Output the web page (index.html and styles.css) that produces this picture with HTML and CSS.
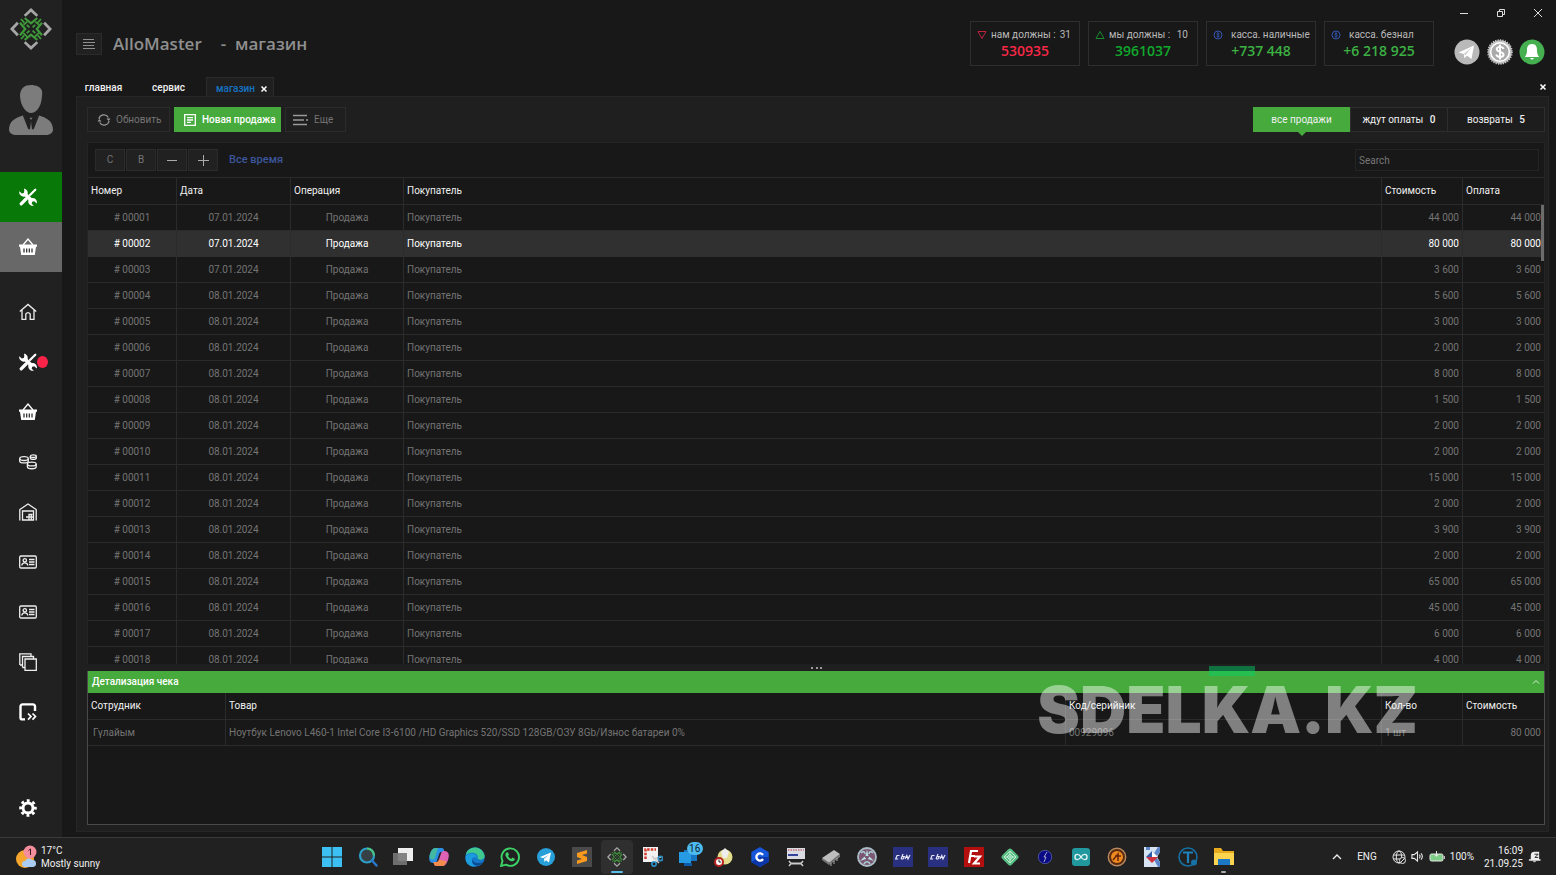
FILE: index.html
```html
<!DOCTYPE html>
<html lang="ru">
<head>
<meta charset="utf-8">
<meta name="viewport" content="width=device-width, initial-scale=1">
<title>AlloMaster - магазин</title>
<link rel="stylesheet" href="styles.css">
</head>
<body>
<svg class="sprite" aria-hidden="true">
  <symbol id="logo" viewBox="0 0 40 40">
    <g fill="none" stroke="#a6a6a6" stroke-width="2.6">
      <path d="M14 7.500 20 1.800l6 5.700M14 32.500l6 5.700 6-5.700M7.500 14 1.800 20l5.700 6M32.500 14l5.700 6-5.700 6"/>
    </g>
    <g fill="none" stroke="#3f9a3a" stroke-width="2.1">
      <path d="m14 9.500 6 5 6-5M14 30.500l6-5 6 5M9.500 14l5 6-5 6M30.500 14l-5 6 5 6"/>
      <path d="m10.500 10.500 3 3.500M29.500 10.500l-3 3.500M10.500 29.500l3-3.500M29.500 29.500l-3-3.500M13 16l3.500-3M24 13l3.500 3M12.800 24l3.700 3.500M27.200 24l-3.700 3.500M16 16l2.500 2.500M24 16l-2.500 2.500M16 24l2.500-2.500M24 24l-2.500-2.500" stroke-width="1.700"/>
    </g>
  </symbol>
  <symbol id="tools" viewBox="0 0 18 18">
    <path d="M16.300 1.700 11 7M7 11l-5 5" fill="none" stroke="#fff" stroke-width="2.200" stroke-linecap="round"/>
    <path d="M7 11l-4.800 4.800" fill="none" stroke="#fff" stroke-width="3.200" stroke-linecap="round"/>
    <path d="M5 .4A4.500 4.500 0 0 1 8.600 6l4 4a4.500 4.500 0 0 1 5.200 5.500l-2.600-2.300-2 .5-.5 2 2.200 2A4.500 4.500 0 0 1 9.400 12.200L5.700 8.500A4.500 4.500 0 0 1 .3 3.200l2.500 2.300 2-.5.500-2z" fill="#fff"/>
  </symbol>
  <symbol id="basket" viewBox="0 0 18 18">
    <path d="M4 7 9 1l5 6" fill="none" stroke="#fff" stroke-width="1.300"/>
    <path d="M0 6.600h18v2.200h-1L15.800 17H2.200L1 8.800H0z" fill="#fff"/>
    <path d="M5 10.500v4M7.700 10.500v4M10.300 10.500v4M13 10.500v4" stroke="#222" stroke-width="1.200"/>
  </symbol>
  <symbol id="house" viewBox="0 0 18 18">
    <path d="M.8 8.600 9 1.400l8.200 7.200M3 7v9.300h3.800V11q2.200-2.600 4.400 0v5.300H15V7" fill="none" stroke="#eee" stroke-width="1.300"/>
  </symbol>
  <symbol id="coins" viewBox="0 0 18 18">
    <g fill="none" stroke="#eee" stroke-width="1.300">
      <ellipse cx="5" cy="5.600" rx="4.300" ry="1.900"/><path d="M.7 5.600V8c0 2.600 8.600 2.600 8.600 0V5.600"/>
      <ellipse cx="14.300" cy="3.200" rx="3" ry="1.300"/><path d="M11.300 3.200V5c0 1.900 6 1.900 6 0V3.200"/>
      <ellipse cx="12.800" cy="11" rx="4.400" ry="1.900"/><path d="M8.400 11v2.800c0 2.600 8.800 2.600 8.800 0V11"/>
    </g>
  </symbol>
  <symbol id="store" viewBox="0 0 18 18">
    <g fill="none" stroke="#eee" stroke-width="1.300"><path d="M.8 17.500V6.500L9 1l8.200 5.500v11M3.500 17V8h11v9zM7 14h3v-2.500h3.500M10 17v-5M12.300 12v5M10 14h4"/></g>
  </symbol>
  <symbol id="card" viewBox="0 0 18 18">
    <g fill="none" stroke="#eee" stroke-width="1.300"><rect x=".7" y="3" width="16.600" height="12" rx="1.200"/><circle cx="5.800" cy="7.300" r="1.700"/><path d="M2.800 12.500c.5-3.600 5.500-3.600 6 0M10 6.500h5.500M10 9h5.500M10 11.500h5.500"/></g>
  </symbol>
  <symbol id="copies" viewBox="0 0 18 18">
    <g fill="none" stroke="#eee" stroke-width="1.300"><path d="M.8 12V.8H12v2M1 12h2M3.500 14.500v-11h11v2.300M3.500 14.500H6M6 6h11.300v11.300H6z"/></g>
  </symbol>
  <symbol id="exit" viewBox="0 0 18 18">
    <path d="M16 8V3.500A2 2 0 0 0 14 1.400H3.500a2 2 0 0 0-2 2v11a2 2 0 0 0 2 2H6" fill="none" stroke="#fff" stroke-width="2.400"/>
    <path d="m9 10.500 3 3-3 3.200M13.500 10.500l3 3-3 3.200" fill="none" stroke="#fff" stroke-width="1.700"/>
  </symbol>
  <symbol id="gear" viewBox="0 0 18 18">
    <circle cx="9" cy="9" r="5" fill="none" stroke="#fff" stroke-width="3"/>
    <circle cx="9" cy="9" r="7.400" fill="none" stroke="#fff" stroke-width="2.800" stroke-dasharray="2.900 2.910" stroke-dashoffset="1.450"/>
  </symbol>
  <symbol id="coin" viewBox="0 0 10 10">
    <g fill="none" stroke="#3454b0" stroke-width="1"><circle cx="5" cy="5" r="4"/><path d="M6.500 3.700C5.800 2.800 3.600 3 3.800 4.100c.2 1 2.600.6 2.600 1.800 0 1-2.200 1.200-3 .2M5 2.200v5.600" stroke-width=".8"/></g>
  </symbol>
</svg>

<div class="shell">
  <aside class="side">
    <svg class="side-logo"><use href="#logo"/></svg>
    <svg class="avatar" viewBox="0 0 44 52">
      <path d="M11 12C11 4 16 1 22 1c5 0 10 2 11 6 .5 3 0 4-.2 7C32 23 27 29 22 29S11.500 22 11 12z" fill="#7c7c7c"/>
      <path d="M0 46c0-9 6-12 15-15l6 15 1-10-2-3h4l-2 3 1 10 6-15c9 3 15 6 15 15 0 3-4 5-7 5H7c-3 0-7-2-7-5z" fill="#7c7c7c"/>
      <path d="m14.500 31 5.500 14 .7-8.500L18.500 33h7l-2.200 3.500L24 45l5.500-14" fill="none" stroke="#212121" stroke-width="1.600"/>
    </svg>
    <nav class="nav">
      <button class="nav-item nav-green" aria-label="Сервис"><svg><use href="#tools"/></svg></button>
      <button class="nav-item nav-grey" aria-label="Магазин"><svg><use href="#basket"/></svg></button>
      <button class="nav-item nav-gap" aria-label="Главная"><svg><use href="#house"/></svg></button>
      <button class="nav-item" aria-label="Ремонты"><svg><use href="#tools"/></svg><span class="dot"></span></button>
      <button class="nav-item" aria-label="Продажи"><svg><use href="#basket"/></svg></button>
      <button class="nav-item" aria-label="Деньги"><svg><use href="#coins"/></svg></button>
      <button class="nav-item" aria-label="Склад"><svg><use href="#store"/></svg></button>
      <button class="nav-item" aria-label="Клиенты"><svg><use href="#card"/></svg></button>
      <button class="nav-item" aria-label="Сотрудники"><svg><use href="#card"/></svg></button>
      <button class="nav-item" aria-label="Документы"><svg><use href="#copies"/></svg></button>
      <button class="nav-item" aria-label="Выход"><svg><use href="#exit"/></svg></button>
      <button class="nav-item nav-last" aria-label="Настройки"><svg><use href="#gear"/></svg></button>
    </nav>
  </aside>

  <main class="main">
    <header class="top">
      <button class="burger" aria-label="Меню"><svg viewBox="0 0 14 12"><path d="M1 1.500h11M1 4.500h12M1 7.500h11M1 10.500h12" stroke="#8f8f8f"/></svg></button>
      <h1 class="title"><span>AlloMaster</span><span>-&nbsp; магазин</span></h1>
      <div class="stats">
        <section class="stat"><p><svg viewBox="0 0 10 10"><path d="M1 1.500h8L5 8.500z" fill="none" stroke="#c02340"/></svg>нам должны :<i>31</i></p><b class="red">530935</b></section>
        <section class="stat"><p><svg viewBox="0 0 10 10"><path d="M1 8.500h8L5 1.500z" fill="none" stroke="#168a2c"/></svg>мы должны :<i>10</i></p><b class="green">3961037</b></section>
        <section class="stat"><p><svg><use href="#coin"/></svg><span>касса. наличные</span></p><b class="lime">+737 448</b></section>
        <section class="stat"><p><svg><use href="#coin"/></svg><span>касса. безнал</span></p><b class="lime">+6 218 925</b></section>
      </div>
      <div class="corner">
        <div class="win">
          <button aria-label="Свернуть"><svg viewBox="0 0 10 10"><path d="M1 5.500h8" stroke="#ddd"/></svg></button>
          <button aria-label="Развернуть"><svg viewBox="0 0 10 10"><path d="M1.500 3.500h5v5h-5zM3.500 3V1.500h5v5H7" fill="none" stroke="#ddd"/></svg></button>
          <button aria-label="Закрыть"><svg viewBox="0 0 10 10"><path d="m1 1 8 8M9 1 1 9" stroke="#ddd"/></svg></button>
        </div>
        <div class="round">
          <button aria-label="Сообщения"><svg viewBox="0 0 26 26"><circle cx="13" cy="13" r="12.500" fill="#b9b9b9"/><path d="m4.500 13.500 15.500-7-2.500 13.500-4.500-3.300-2.700 2.500-.5-4.200z" fill="#fff"/><path d="m9.800 15 7.200-6.300-5.500 7.300" fill="#c9c9c9"/></svg></button>
          <button aria-label="Оплата"><svg viewBox="0 0 26 26"><circle cx="13" cy="13" r="11.800" fill="#c4c4c4" stroke="#c4c4c4" stroke-width="2" stroke-dasharray="1.200 1.200"/><circle cx="13" cy="13" r="9.300" fill="#aaa" stroke="#fff" stroke-width="1.500"/><path d="M16.500 10c-.8-3-6.800-2.800-6.800.2 0 3.200 6.900 2 6.900 5.400 0 3.200-6.600 3.200-7.400 0M13 5.500v15" fill="none" stroke="#fff" stroke-width="1.900"/></svg></button>
          <button aria-label="Уведомления"><svg viewBox="0 0 26 26"><circle cx="13" cy="13" r="12.500" fill="#46b050"/><path d="M13 5c4 0 5 3 5 6 0 4 1 5 2 7H6c1-2 2-3 2-7 0-3 1-6 5-6zM11 19h4q-2 3-4 0z" fill="#fff"/></svg></button>
        </div>
      </div>
    </header>

    <div class="tabs">
      <button class="tab">главная</button>
      <button class="tab">сервис</button>
      <div class="tab tab-on"><span>магазин</span><button class="x" aria-label="Закрыть вкладку"><svg viewBox="0 0 8 8"><path d="m1.500 1.500 5 5M6.500 1.500l-5 5" stroke="#fff" stroke-width="1.500"/></svg></button></div>
      <button class="x x-end" aria-label="Закрыть все"><svg viewBox="0 0 8 8"><path d="m1.500 1.500 5 5M6.500 1.500l-5 5" stroke="#fff" stroke-width="1.500"/></svg></button>
    </div>

    <div class="panel">
      <div class="bar">
        <button class="btn"><svg viewBox="0 0 14 14"><path d="M2 6a5 5 0 0 1 9.300-1.500M12 8a5 5 0 0 1-9.300 1.500" fill="none" stroke="#999" stroke-width="1.300"/><path d="M9.500 5.500h4L11.700 8zM.5 8.500h4L2.300 6z" fill="#999"/></svg>Обновить</button>
        <button class="btn btn-green"><svg viewBox="0 0 14 14"><path d="M1.700 1.700h10.600v10.600H1.700zM4 4.700h6M4 7h6M4 9.300h4" fill="none" stroke="#fff" stroke-width="1.300"/></svg>Новая продажа</button>
        <button class="btn btn-more"><svg class="wide" viewBox="0 0 16 14"><path d="M0 2.500h14M0 7h11M13 7h2M0 11.500h14" stroke="#999" stroke-width="1.300"/></svg>Еще</button>
        <div class="filters">
          <button class="filter filter-on">все продажи</button>
          <button class="filter">ждут оплаты <b>0</b></button>
          <button class="filter">возвраты <b>5</b></button>
        </div>
      </div>

      <div class="grid-box">
        <div class="period">
          <button class="sq">C</button><button class="sq">В</button>
          <button class="sq" aria-label="Назад"><svg viewBox="0 0 12 12"><path d="M1 6.500h10" stroke="#aaa"/></svg></button>
          <button class="sq" aria-label="Вперёд"><svg viewBox="0 0 12 12"><path d="M1 6.500h11M6.500 1v11" stroke="#aaa"/></svg></button>
          <a class="all" href="#">Все время</a>
          <input class="search" type="text" placeholder="Search" aria-label="Search">
        </div>
        <div class="scroll">
          <table class="sales">
            <colgroup><col class="c-num"><col class="c-date"><col class="c-op"><col><col class="c-sum"><col class="c-pay"></colgroup>
            <thead><tr><th>Номер</th><th>Дата</th><th>Операция</th><th>Покупатель</th><th>Стоимость</th><th>Оплата</th></tr></thead>
            <tbody>
              <tr><td># 00001</td><td>07.01.2024</td><td>Продажа</td><td>Покупатель</td><td>44 000</td><td>44 000</td></tr>
              <tr class="on"><td># 00002</td><td>07.01.2024</td><td>Продажа</td><td>Покупатель</td><td>80 000</td><td>80 000</td></tr>
              <tr><td># 00003</td><td>07.01.2024</td><td>Продажа</td><td>Покупатель</td><td>3 600</td><td>3 600</td></tr>
              <tr><td># 00004</td><td>08.01.2024</td><td>Продажа</td><td>Покупатель</td><td>5 600</td><td>5 600</td></tr>
              <tr><td># 00005</td><td>08.01.2024</td><td>Продажа</td><td>Покупатель</td><td>3 000</td><td>3 000</td></tr>
              <tr><td># 00006</td><td>08.01.2024</td><td>Продажа</td><td>Покупатель</td><td>2 000</td><td>2 000</td></tr>
              <tr><td># 00007</td><td>08.01.2024</td><td>Продажа</td><td>Покупатель</td><td>8 000</td><td>8 000</td></tr>
              <tr><td># 00008</td><td>08.01.2024</td><td>Продажа</td><td>Покупатель</td><td>1 500</td><td>1 500</td></tr>
              <tr><td># 00009</td><td>08.01.2024</td><td>Продажа</td><td>Покупатель</td><td>2 000</td><td>2 000</td></tr>
              <tr><td># 00010</td><td>08.01.2024</td><td>Продажа</td><td>Покупатель</td><td>2 000</td><td>2 000</td></tr>
              <tr><td># 00011</td><td>08.01.2024</td><td>Продажа</td><td>Покупатель</td><td>15 000</td><td>15 000</td></tr>
              <tr><td># 00012</td><td>08.01.2024</td><td>Продажа</td><td>Покупатель</td><td>2 000</td><td>2 000</td></tr>
              <tr><td># 00013</td><td>08.01.2024</td><td>Продажа</td><td>Покупатель</td><td>3 900</td><td>3 900</td></tr>
              <tr><td># 00014</td><td>08.01.2024</td><td>Продажа</td><td>Покупатель</td><td>2 000</td><td>2 000</td></tr>
              <tr><td># 00015</td><td>08.01.2024</td><td>Продажа</td><td>Покупатель</td><td>65 000</td><td>65 000</td></tr>
              <tr><td># 00016</td><td>08.01.2024</td><td>Продажа</td><td>Покупатель</td><td>45 000</td><td>45 000</td></tr>
              <tr><td># 00017</td><td>08.01.2024</td><td>Продажа</td><td>Покупатель</td><td>6 000</td><td>6 000</td></tr>
              <tr><td># 00018</td><td>08.01.2024</td><td>Продажа</td><td>Покупатель</td><td>4 000</td><td>4 000</td></tr>
            </tbody>
          </table>
          <span class="thumb"></span>
        </div>
      </div>

      <div class="split"><span></span></div>

      <section class="detail">
        <button class="detail-head"><span>Детализация чека</span><svg viewBox="0 0 8 8"><path d="m1 5.500 3-3 3 3" fill="none" stroke="#d8f0d4"/></svg></button>
        <table class="lines">
          <colgroup><col class="d-who"><col><col class="d-code"><col class="c-sum"><col class="c-pay"></colgroup>
          <thead><tr><th>Сотрудник</th><th>Товар</th><th>Код/серийник</th><th>Кол-во</th><th>Стоимость</th></tr></thead>
          <tbody><tr><td>Гүлайым</td><td>Ноутбук Lenovo L460-1 Intel Core I3-6100 /HD Graphics 520/SSD 128GB/ОЗУ 8Gb/Износ батареи 0%</td><td>00929096</td><td>1 шт</td><td>80 000</td></tr></tbody>
        </table>
        <div class="mark"><i></i><span>SDELKA.KZ</span></div>
      </section>
    </div>
  </main>
</div>

<footer class="task">
  <button class="weather">
    <svg viewBox="0 0 22 24"><circle cx="9" cy="14" r="9" fill="#f6a62c"/><path d="M9 22a3 3 0 0 1 0-6 4 4 0 0 1 7-1 3.500 3.500 0 0 1 1 7z" fill="#a9cdf5"/><circle cx="14" cy="7" r="6.500" fill="#f58e9c"/><path d="m12.500 5.500 2-1.500v6" fill="none" stroke="#3a1a20"/></svg>
    <span>17°C<br>Mostly sunny</span>
  </button>
  <div class="apps">
    <button aria-label="Start"><svg viewBox="0 0 20 20"><path d="M0 0h9.500v9.500H0zM10.500 0H20v9.500h-9.500zM0 10.500h9.500V20H0zM10.500 10.500H20V20h-9.500z" fill="#3cc0f4"/></svg></button>
    <button aria-label="Search"><svg viewBox="0 0 20 20"><circle cx="9" cy="8.500" r="7" fill="#374045" stroke="#2c9fc9" stroke-width="2.200"/><path d="M9 1.500a7 7 0 0 1 7 7" fill="none" stroke="#4bc47c" stroke-width="2.200"/><path d="m14 13.500 4.500 5" stroke="#2878cc" stroke-width="2.500" stroke-linecap="round"/></svg></button>
    <button aria-label="Task view"><svg viewBox="0 0 20 20"><path d="M5 1h15v13H5z" fill="#eee"/><path d="M0 6h14v12H0z" fill="#777" opacity=".9"/></svg></button>
    <button aria-label="Copilot"><svg viewBox="0 0 20 20"><path d="M6.500 1h6.300c1.700 0 2.200 1.500 2.700 4h-3.200c-1.300 0-1.800 1-2.200 2.200L7.800 14c-.6 1.500-1.400 2-3 2-3.600 0-5.400-2.500-4.300-7C1.500 5 3 1 6.500 1z" fill="#2b8fe8"/><path d="M.5 9C1.500 5 3 1 6.500 1H9L5.500 12C3 13 .5 12 .5 9z" fill="#42b8a0"/><path d="M13.500 19H7.200c-1.700 0-2.200-1.500-2.700-4h3.200c1.300 0 1.800-1 2.200-2.200L12.200 6c.6-1.500 1.400-2 3-2 3.600 0 5.400 2.500 4.300 7-1 4-2.500 8-6 8z" fill="#dd62b4"/><path d="M13.500 19H7.200c-1.700 0-2.200-1.500-2.700-4h3.200c1.300 0 1.800-1 2.200-2.200l7.600 1.200c-1 3-2 5-4 5z" fill="#f28b4c"/></svg></button>
    <button aria-label="Edge"><svg viewBox="0 0 20 20"><circle cx="10" cy="10" r="9.800" fill="#1579cb"/><path d="M1 8C2-1 16-3 19.500 8c1 5-6 6-7 3 2-4-6-8-11.500-3z" fill="#3fc98e"/><path d="M1 9c4-5 11-2 11 2-5-4-8 4 0 8C5 21-1 16 1 9z" fill="#1b9de0"/><path d="M7 11c0 5 6 6 11 4-3 5-12 6-11-4z" fill="#0d4b93"/></svg></button>
    <button aria-label="WhatsApp"><svg viewBox="0 0 20 20"><path d="M1 19l1.500-5A8.700 8.700 0 1 1 6 17.700z" fill="none" stroke="#3dd267" stroke-width="1.900"/><path d="M6.500 5.500 8 5.300l1 2.500-1 1.300a6 6 0 0 0 3.200 2.800l1.200-1.300 2.400 1.200c0 2.500-2.400 2.700-4 2.200A9 9 0 0 1 5.600 9c-.5-1.500 0-3 .9-3.500z" fill="#3dd267"/></svg></button>
    <button aria-label="Telegram"><svg viewBox="0 0 20 20"><circle cx="10" cy="10" r="9" fill="#279fd8"/><path d="m4 10 11-4.500-2 10-3-2.300L8.500 15 8 11.800l5-4-6 3.500z" fill="#fff"/></svg></button>
    <button aria-label="Sublime Text"><svg viewBox="0 0 20 20"><path d="M0 0h20v20H0z" fill="#4a4a4a"/><path d="M15 3v3.500L10 8l5 2v4L5 17v-3.500L10 12 5 10V6z" fill="#f99a1c"/></svg></button>
    <button class="running" aria-label="AlloMaster"><svg><use href="#logo"/></svg></button>
    <button aria-label="Snipping"><svg viewBox="0 0 20 20"><path d="M0 0h15v15H0z" fill="#f2f2f2"/><path d="M2.500 12V2.500H13" fill="none" stroke="#d43b2c" stroke-width="2.500" stroke-dasharray="2.500 1.200"/><path d="m9 9 7 7M18 10l-8 2" stroke="#ccc" stroke-width="1.500"/><circle cx="11" cy="17" r="2.200" fill="none" stroke="#2f8fc4" stroke-width="1.700"/><circle cx="17.500" cy="11.500" r="2.200" fill="none" stroke="#2f8fc4" stroke-width="1.700"/></svg></button>
    <button class="badged" aria-label="Mail"><svg viewBox="0 0 20 20"><path d="M5 3h13v11H5z" fill="#1776c2"/><path d="M0 5h12v11H0z" fill="#269be4"/><path d="M5 16h8v3H5z" fill="#0c5ba8"/></svg><span>16</span></button>
    <button aria-label="Scheduler"><svg viewBox="0 0 20 20"><circle cx="11" cy="10" r="7.500" fill="#e4dd8b"/><path d="M7 5l4-4 4 4-2 6H9z" fill="#eee"/><circle cx="5" cy="15" r="4" fill="#fff" stroke="#b5221f" stroke-width="2"/><path d="M5 12.500V15h2" fill="none" stroke="#222"/></svg></button>
    <button aria-label="Code editor"><svg viewBox="0 0 20 20"><path d="m10 0 8.700 5v10L10 20l-8.700-5V5z" fill="#1557d8"/><path d="M10 10h8.700v5L10 20l-8.700-5z" fill="#0a36a8"/><path d="M13 8a3.600 3.600 0 1 0 0 4" fill="none" stroke="#fff" stroke-width="2.300"/></svg></button>
    <button aria-label="Service tool"><svg viewBox="0 0 20 20"><path d="M1 1h18v11H1z" fill="#dadae2"/><path d="M2 3h16" stroke="#b84040" stroke-dasharray="1.500 1"/><path d="M2 8h10" stroke="#34449b" stroke-width="2"/><path d="M5 16.500h10" stroke="#ccc" stroke-width="2"/><path d="M3 14l2 2.500L3 19M17 14l-2 2.500 2 2.500" fill="none" stroke="#ccc" stroke-width="1.500"/></svg></button>
    <button aria-label="Programmer"><svg viewBox="0 0 20 20"><path d="m1 11 12-8 6 4-11 9z" fill="#bdbdbd"/><path d="m1 11 7 5v2l-7-5zM8 16l11-9v3L8 18z" fill="#777"/><path d="M10 16v3M13 14v3M16 11v3" stroke="#aaa"/></svg></button>
    <button aria-label="Fan tool"><svg viewBox="0 0 20 20"><circle cx="10" cy="10" r="9" fill="#7c5773" stroke="#a9bec6" stroke-width="1.800"/><path d="m10 2.500 1.500 6.500h-3zM17 14l-6.200-2 1.700-2.500zM3 14l4.500-4.500L9.200 12z" fill="#b8dfe0"/><path d="M4 6c2-2 4-1.500 4 1M16 6c-2-2-4-1.500-4 1M7 17c1-3 5-3 6 0" fill="none" stroke="#a7ced2" stroke-width="1.500"/></svg></button>
    <button aria-label="CBN 1"><svg viewBox="0 0 20 20"><path d="M0 0h20v20H0z" fill="#28307f"/><path d="M6.500 8.500H4l-1.300 3.500h2.500M8 12l2-5M8.500 9.500h2.800L10 12H8M12 12l1.800-3.500 1.200 3.500 2-4" fill="none" stroke="#e6e8f5" stroke-width="1.200"/></svg></button>
    <button aria-label="CBN 2"><svg viewBox="0 0 20 20"><path d="M0 0h20v20H0z" fill="#28307f"/><path d="M6.500 8.500H4l-1.300 3.500h2.500M8 12l2-5M8.500 9.500h2.800L10 12H8M12 12l1.800-3.500 1.200 3.500 2-4" fill="none" stroke="#e6e8f5" stroke-width="1.200"/></svg></button>
    <button aria-label="FileZilla"><svg viewBox="0 0 20 20"><path d="M0 0h20v20H0z" fill="#b30f0f"/><path d="M5 16 7 4h7M6 9h5M10 9.500h6l-6 7h6" fill="none" stroke="#fff" stroke-width="2.200"/></svg></button>
    <button aria-label="Diamond tool"><svg viewBox="0 0 20 20"><rect x="3.300" y="3.300" width="13.400" height="13.400" rx="2.500" transform="rotate(45 10 10)" fill="#57bd83"/><path d="m10 4 6 6-6 6-6-6zM10 7l3 3-3 3-3-3zM10 4v12M4 10h12" fill="none" stroke="#bfead0"/></svg></button>
    <button aria-label="Flash tool"><svg viewBox="0 0 20 20"><circle cx="10" cy="10" r="6.700" fill="#0b0b86" stroke="#5862aa" stroke-width=".8"/><path d="m12 5-3 5h2l-2 5" fill="none" stroke="#ccd" stroke-width=".8"/></svg></button>
    <button aria-label="Arduino"><svg viewBox="0 0 20 20"><rect x="1" y="1" width="18" height="18" rx="3" fill="#21989d"/><path d="M10 10c-2-3.500-6-3.500-6 0s4 3.500 6 0 6-3.500 6 0-4 3.500-6 0z" fill="none" stroke="#e3f4f4" stroke-width="1.400"/></svg></button>
    <button aria-label="Burner"><svg viewBox="0 0 20 20"><circle cx="10" cy="10" r="8.700" fill="#5a2b10" stroke="#b98a60" stroke-width="1.400"/><circle cx="10" cy="10" r="6" fill="#ee8a20"/><path d="M6 13l5-6v7M8 9h6" fill="none" stroke="#6a2508" stroke-width="1.500"/></svg></button>
    <button aria-label="K tool"><svg viewBox="0 0 20 20"><path d="M2 0h16v5l-3 5 3 5v5H2z" fill="#d6e3f3"/><path d="M4 0h4v3H4zM18 0v5l-4 5 4 5v5h-2l-5-9V8l5-8z" fill="#5d86c8"/><path d="m4 10 6-6 6 6z" fill="#2c5daa"/><path d="M10 4v6h6z" fill="#fff"/><path d="M4 10h12l-6 6z" fill="#cf3340"/></svg></button>
    <button aria-label="T tool"><svg viewBox="0 0 20 20"><circle cx="10" cy="10" r="9" fill="none" stroke="#1672a6" stroke-width="1.500"/><path d="M5 5.500h10M10 5.500V16" stroke="#1f82ba" stroke-width="2.200"/><circle cx="16" cy="15.500" r="3" fill="#1672a6"/></svg></button>
    <button class="open" aria-label="Explorer"><svg viewBox="0 0 20 20"><path d="M0 1h7l2 3h11v14H0z" fill="#e8ab1e"/><path d="M0 6h20v12H0z" fill="#fcd34e"/><path d="M4 12h12v6H4z" fill="#1c78c4"/></svg></button>
  </div>
  <div class="tray">
    <button aria-label="Hidden icons"><svg viewBox="0 0 10 10"><path d="m1 7 4-4 4 4" fill="none" stroke="#eee" stroke-width="1.300"/></svg></button>
    <span class="lang">ENG</span>
    <svg class="t14" viewBox="0 0 14 14"><g fill="none" stroke="#e8e8e8"><circle cx="7" cy="7" r="6"/><ellipse cx="7" cy="7" rx="2.700" ry="6"/><path d="M1.500 5h11M1.500 9h11"/></g><circle cx="10.500" cy="10.500" r="3" fill="#212121" stroke="#e8e8e8"/><path d="m8.500 12.500 4-4" stroke="#e8e8e8"/></svg>
    <svg class="t12" viewBox="0 0 14 14"><path d="M1 5h2.500L7 2v10L3.500 9H1zM9 5q1.500 2 0 4M10.700 3.500q3 3.500 0 7" fill="none" stroke="#e8e8e8" stroke-width="1.200"/></svg>
    <svg class="t16" viewBox="0 0 16 14"><rect x="1" y="4" width="13" height="7" rx="1.500" fill="#7fce88" stroke="#e8e8e8"/><path d="M15.300 6v3M7.500 1v5M5.500 4l2 2.500 2-2.500" fill="none" stroke="#e8e8e8"/></svg>
    <span class="pct">100%</span>
    <time>16:09<br>21.09.25</time>
    <svg class="t12" viewBox="0 0 14 14"><path d="M3 10V6q0-4 4-4h5v8h1.500v1.500H1V10zM5 12h4q-2 2.500-4 0z" fill="#eee"/><path d="M7 4.500h4L7.500 8H11" fill="none" stroke="#222"/></svg>
  </div>
</footer>
</body>
</html>
```
FILE: styles.css
```css
* { box-sizing: border-box; }

:root {
  --bg: #181818;
  --side: #212121;
  --panel: #1f1f1f;
  --line: #2b2b2b;
  --green: #46ab3c;
  --dim: #747474;
}

body {
  margin: 0;
  height: 100vh;
  display: flex;
  flex-direction: column;
  overflow: hidden;
  background: var(--bg);
  color: #f0f0f0;
  font: 10px/14px Roboto, "Noto Sans", sans-serif;
}

button {
  padding: 0;
  border: 0;
  background: none;
  color: inherit;
  font: inherit;
}

svg { display: block; flex: none; }
.sprite { display: none; }
h1, p { margin: 0; }
i { font-style: normal; }

.shell { flex: 1; min-height: 0; display: flex; }

/* sidebar */
.side {
  width: 62px;
  flex: none;
  display: flex;
  flex-direction: column;
  align-items: center;
  background: var(--side);
}
.side-logo { width: 42px; height: 42px; margin-top: 8px; }
.avatar { width: 44px; height: 52px; margin: 34px 0 36px; }
.nav { flex: 1; width: 100%; display: flex; flex-direction: column; padding-bottom: 4px; }
.nav-item { height: 50px; flex: none; display: flex; align-items: center; padding-left: 19px; }
.nav-item svg { width: 18px; height: 18px; }
.nav-green { background: #087808; }
.nav-grey { background: #686868; }
.nav-gap { margin-top: 15px; }
.nav-last { margin-top: auto; }
.dot { width: 11px; height: 12px; border-radius: 50%; background: #fb2448; }

/* header */
.main { flex: 1; min-width: 0; display: flex; flex-direction: column; padding: 0 7px 5px 14px; }
.top { height: 77px; flex: none; display: flex; }
.burger {
  width: 26px;
  height: 22px;
  margin-top: 33px;
  display: grid;
  place-items: center;
  border: 1px solid var(--line);
  background: #212121;
}
.burger svg { width: 14px; height: 12px; }
.title {
  margin: 32px 0 0 11px;
  display: flex;
  gap: 19px;
  color: #8f8f8f;
  font: 600 17px/24px "Open Sans", sans-serif;
}
.stats { margin: 21px 0 0 auto; display: flex; gap: 8px; }
.stat {
  width: 110px;
  height: 45px;
  padding: 6px 6px 0;
  border: 1px solid #2e2e2e;
  text-align: center;
}
.stat p { display: flex; align-items: center; gap: 4px; color: #b8b8b8; white-space: nowrap; }
.stat p i { margin-left: auto; padding-right: 3px; }
.stat p span { padding-left: 4px; }
.stat p svg { width: 10px; height: 10px; }
.stat b { display: block; font: 600 14px/18px "Open Sans", sans-serif; }
.red { color: #f62746; }
.green { color: #10a82c; }
.lime { color: #3cb043; }
.corner { width: 115px; }
.win, .round { display: flex; justify-content: space-between; }
.win { height: 26px; padding: 0 1px 0 20px; align-items: center; }
.win svg { width: 10px; height: 10px; }
.win button { width: 20px; display: grid; place-items: center; }
.round { padding: 13px 4px 0 20px; }
.round svg { width: 26px; height: 26px; }

/* tabs */
.tabs { height: 20px; flex: none; display: flex; align-items: stretch; margin-bottom: -1px; }
.tab { width: 65px; display: flex; align-items: center; justify-content: center; padding: 2px 10px 0 0; font-weight: 500; }
.tab:first-child { padding-left: 0; }
.tab-on {
  width: 68px;
  padding: 2px 5px 0 9px;
  justify-content: space-between;
  border: 1px solid var(--line);
  border-bottom: 0;
  background: var(--panel);
  color: #1573c4;
}
.x svg { width: 8px; height: 8px; }
.x-end { margin-left: auto; padding-right: 2px; }

/* panel */
.panel {
  flex: 1;
  min-height: 0;
  display: flex;
  flex-direction: column;
  padding: 10px 3px 6px 10px;
  border: 1px solid #262626;
  background: var(--panel);
}
.bar { display: flex; gap: 4px; margin-bottom: 10px; }
.btn {
  height: 25px;
  width: 83px;
  padding: 0 9px;
  display: flex;
  align-items: center;
  gap: 5px;
  border: 1px solid var(--line);
  color: var(--dim);
  white-space: nowrap;
}
.btn svg { width: 14px; height: 14px; }
.btn svg.wide { width: 16px; }
.btn-green { width: 107px; padding: 0 8px; border-color: var(--green); background: var(--green); color: #fff; font-weight: 500; }
.btn-more { width: 61px; padding-left: 7px; }
.filters { margin-left: auto; display: flex; border: 1px solid #2e2e2e; border-width: 1px 1px 1px 0; }
.filter { width: 97px; border-left: 1px solid #2e2e2e; background: #1d1d1d; }
.filter b { padding-left: 4px; font-weight: 500; }
.filter-on { position: relative; margin: -1px 0; border: 0; background: var(--green); }
.filter-on::after {
  content: "";
  position: absolute;
  top: 100%;
  left: 50%;
  border: 4px solid transparent;
  border-top-color: var(--green);
  border-bottom: 0;
  translate: -50%;
}

.grid-box { flex: 1; min-height: 0; display: flex; flex-direction: column; border: 1px solid #242424; border-bottom: 0; background: var(--bg); }
.period { height: 34px; flex: none; display: flex; align-items: center; gap: 1px; padding: 0 5px 0 7px; }
.sq {
  width: 30px;
  height: 22px;
  display: grid;
  place-items: center;
  border: 1px solid var(--line);
  background: #212121;
  color: var(--dim);
}
.sq svg { width: 12px; height: 12px; }
.all { margin-left: 10px; color: #3b569c; font-size: 11px; font-weight: 500; text-decoration: none; }
.search {
  width: 184px;
  height: 22px;
  margin-left: auto;
  padding: 0 3px;
  border: 1px solid #242424;
  background: transparent;
  color: #ddd;
  font: inherit;
}
.search::placeholder { color: #777; opacity: 1; }

.scroll { position: relative; flex: 1; min-height: 0; overflow: hidden; }
.thumb { position: absolute; top: 28px; right: 0; width: 3px; height: 56px; background: #6c6c6c; }

table { width: 100%; border-collapse: separate; border-spacing: 0; table-layout: fixed; }
th, td {
  height: 26px;
  padding: 0 3px;
  overflow: hidden;
  border-right: 1px solid var(--line);
  border-bottom: 1px solid var(--line);
  white-space: nowrap;
  text-align: left;
  font-weight: 400;
}
th:last-child, td:last-child { border-right: 0; }
th { height: 27px; }
td { color: var(--dim); }
.sales th { height: 28px; border-top: 1px solid var(--line); }
.c-num { width: 89px; }
.c-date { width: 114px; }
.c-op { width: 113px; }
.c-sum { width: 81px; }
.c-pay { width: 81px; }
.d-who { width: 138px; }
.d-code { width: 316px; }
.sales td:nth-child(-n+3) { text-align: center; }
.sales td:nth-child(n+5), .lines td:last-child { text-align: right; }
.sales .on td { background: #303030; border-bottom-color: #303030; color: #fff; }

.split { height: 7px; flex: none; display: grid; place-items: center; }
.split span { width: 11px; border-top: 2px dotted #999; }

.detail { position: relative; height: 154px; flex: none; border: 1px solid #4a4a4a; border-top: 0; background: var(--bg); }
.detail-head {
  width: 100%;
  height: 22px;
  display: flex;
  align-items: center;
  justify-content: space-between;
  padding: 0 4px;
  background: var(--green);
  color: #fff;
  font-weight: 500;
}
.detail-head svg { width: 8px; height: 8px; }
.lines td:first-child { padding-left: 5px; }
.mark {
  position: absolute;
  right: 126px;
  top: -5px;
  color: #fff;
  font: 900 64px/64px Inter, sans-serif;
  opacity: .45;
  pointer-events: none;
}
.mark span { display: block; padding-top: 12px; }
.mark i { position: absolute; right: 163px; top: 0; width: 46px; height: 10px; background: #00d56c; }

/* taskbar */
.task {
  height: 38px;
  flex: none;
  display: grid;
  grid-template-columns: 1fr 924px 1fr;
  align-items: center;
  border-top: 1px solid #3a3a3a;
  background: #212121;
  line-height: 13px;
}
.weather { display: flex; align-items: center; gap: 3px; padding-left: 16px; text-align: left; }
.weather svg { width: 22px; height: 24px; }
.apps { display: flex; justify-content: space-between; }
.apps button { position: relative; width: 32px; height: 34px; display: grid; place-items: center; }
.apps svg { width: 20px; height: 20px; }
.apps .running { border-radius: 4px; background: #2f2f2f; }
.running::after, .open::after {
  content: "";
  position: absolute;
  bottom: 1px;
  width: 12px;
  height: 2px;
  border-radius: 1px;
  background: #58bde8;
}
.open::after { width: 5px; background: #aaa; }
.badged span {
  position: absolute;
  top: 2px;
  left: 14px;
  width: 16px;
  border-radius: 7px;
  background: #4cbcf0;
  color: #10202c;
}
.tray { display: flex; align-items: center; justify-content: flex-end; gap: 5px; padding-right: 15px; }
.tray button svg { width: 10px; height: 10px; }
.lang { margin: 0 10px; }
.t14 { width: 14px; height: 14px; }
.t12 { width: 13px; height: 13px; }
.t16 { width: 16px; height: 14px; }
.pct { font-size: 10px; }
.tray time { margin-left: 5px; text-align: right; }
```
